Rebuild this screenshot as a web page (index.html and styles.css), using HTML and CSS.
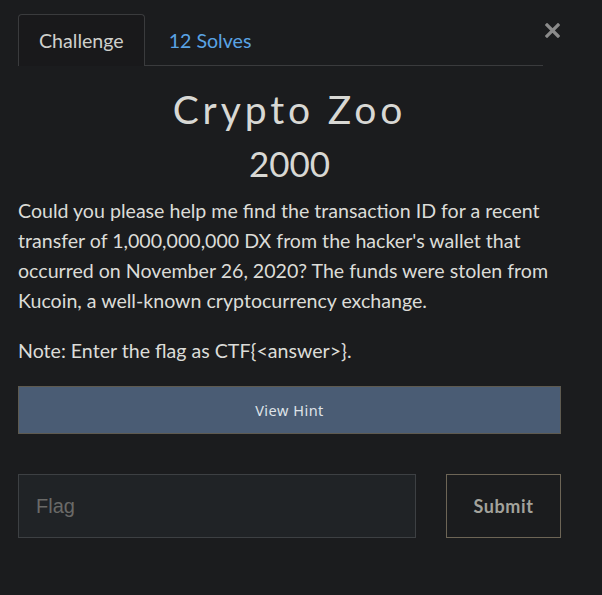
FILE: index.html
```html
<!DOCTYPE html>
<html>
<head>
<meta charset="utf-8">
<link rel="stylesheet" href="styles.css">
</head>
<body>
<div class="modal">
  <div class="header">
    <nav class="tabs">
      <div class="tab active">Challenge</div>
      <div class="tab link">12 Solves</div>
    </nav>
    <button class="close" aria-label="Close">
      <svg width="15" height="15" viewBox="0 0 15 15"><path d="M2 2 L13 13 M13 2 L2 13" stroke="#8b8b8b" stroke-width="3.2" stroke-linecap="square"/></svg>
    </button>
  </div>
  <h1 class="title">Crypto Zoo</h1>
  <h2 class="value">2000</h2>
  <div class="desc">
    <p>Could you please help me find the transaction ID for a recent transfer of 1,000,000,000 DX from the hacker's wallet that occurred on November 26, 2020? The funds were stolen from Kucoin, a well-known cryptocurrency exchange.</p>
    <p>Note: Enter the flag as CTF{&lt;answer&gt;}.</p>
  </div>
  <button class="hint">View Hint</button>
  <form class="submit-row">
    <input class="flag" type="text" placeholder="Flag">
    <button class="submit" type="button">Submit</button>
  </form>
</div>
</body>
</html>
```

FILE: styles.css
```css
html, body {
  margin: 0;
  padding: 0;
  background: #1b1c1e;
}
body {
  font-family: Lato, "Noto Sans", sans-serif;
  color: #dcdcd8;
}
.modal {
  width: 543px;
  padding-left: 18px;
}
.header {
  display: flex;
  align-items: flex-start;
  padding-top: 14px;
}
.tabs {
  display: flex;
  width: 525px;
  border-bottom: 1px solid #3a3b3d;
}
.tab {
  font-size: 19.6px;
  height: 50px;
  line-height: 52px;
  padding: 0 20px;
  border: 1px solid transparent;
  border-bottom: none;
  border-radius: 4px 4px 0 0;
}
.tab.active {
  color: #cfd0cc;
  background: #19191b;
  border-color: #3a3b3d;
  margin-bottom: -1px;
  height: 51px;
}
.tab.link {
  color: #5aa3e4;
  padding-left: 23px;
}
.close {
  background: none;
  border: none;
  padding: 0;
  margin: 9px 0 0 2px;
  width: 15px;
  height: 15px;
  display: block;
}
.close svg { display: block; }
.title {
  font-family: Lato, sans-serif;
  font-weight: 400;
  font-size: 39px;
  letter-spacing: 3.9px;
  text-align: center;
  color: #d8d8d4;
  margin: 20px 0 0;
  line-height: 46px;
}
.value {
  font-family: Lato, sans-serif;
  font-weight: 400;
  font-size: 35px;
  text-align: center;
  color: #d8d8d4;
  margin: 10px 0 0;
  line-height: 42px;
}
.desc {
  margin-top: 12px;
  font-size: 19.6px;
  line-height: 30px;
}
.desc p {
  margin: 0 0 20px;
}
.hint {
  display: block;
  width: 543px;
  height: 48px;
  background: #4a5c74;
  border: 1px solid #5e5a50;
  color: #dfe3e8;
  font-family: "Noto Sans", Lato, sans-serif;
  font-size: 14.5px;
  letter-spacing: 0.5px;
  padding: 0;
}
.submit-row {
  display: flex;
  justify-content: space-between;
  margin: 40px 0 0;
}
.flag {
  box-sizing: border-box;
  width: 398px;
  height: 64px;
  background: #202326;
  border: 1px solid #3d4043;
  padding: 0 17px;
  font-family: "Liberation Sans", Arial, sans-serif;
  font-size: 20px;
  color: #ccc;
  outline: none;
}
.flag::placeholder {
  color: #6a6a68;
}
.submit {
  box-sizing: border-box;
  width: 115px;
  height: 64px;
  background: transparent;
  border: 1px solid #6d6556;
  color: #a3a39c;
  font-family: Lato, sans-serif;
  font-weight: 700;
  font-size: 18px;
  letter-spacing: 0.6px;
  padding: 0;
}
```
